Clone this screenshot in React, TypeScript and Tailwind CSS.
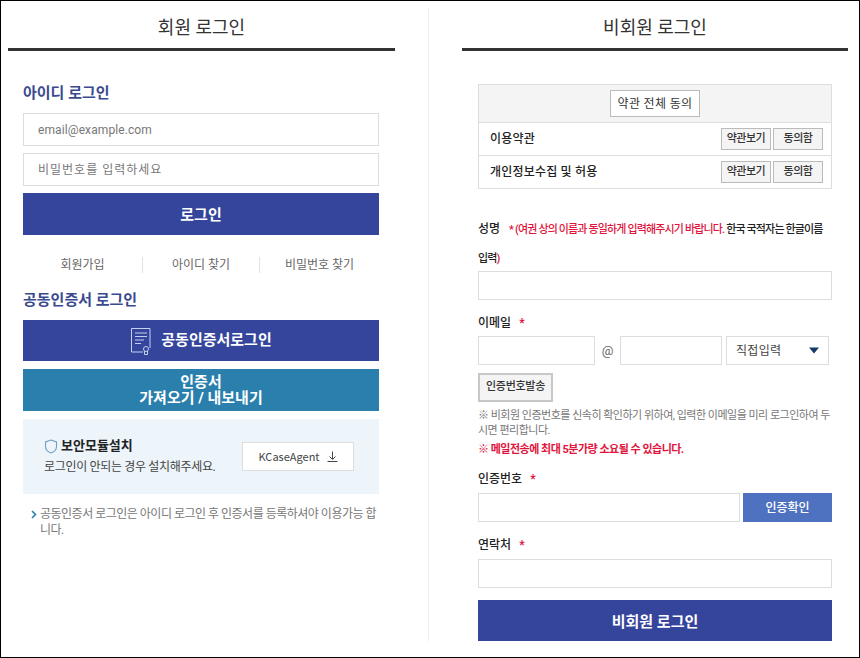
import React from "react";

const font = { fontFamily: 'Roboto, "Noto Sans CJK KR", sans-serif' };

function Req() {
  return <span className="text-[#e0143c] text-[12px] font-bold ml-[8px]">*</span>;
}

function Small({ children }: { children: React.ReactNode }) {
  return (
    <button className="w-[50px] h-[22px] bg-[#f4f4f4] border border-[#bbbbbb] text-[11px] text-[#333] font-medium tracking-[-0.5px] flex items-center justify-center">
      {children}
    </button>
  );
}

function Field({ className = "" }: { className?: string }) {
  return <div className={"h-[29px] bg-white border border-[#dddddd] " + className} />;
}

export default function App() {
  return (
    <div style={font} className="w-[860px] h-[658px] bg-white border border-black flex overflow-hidden text-[#333]">
      {/* left */}
      <div className="w-[428px] h-[633px] mt-[7px] pl-[7px] border-r border-[#eeeeee] shrink-0">
        <div className="w-[387px]">
          <div className="h-[40px] flex items-start justify-center text-[18px] leading-[39px] text-[#333]">회원 로그인</div>
          <div className="h-[3px] bg-[#333]" />
        </div>
        <div className="ml-[15px] w-[356px]">
          <h2 className="mt-[31px] text-[15px] leading-[22px] font-bold text-[#3a4a8f]">아이디 로그인</h2>
          <div className="mt-[9px] h-[33px] border border-[#dddddd] pl-[14px] flex items-center text-[12px] tracking-[0.1px] text-[#777]">email@example.com</div>
          <div className="mt-[7px] h-[33px] border border-[#dddddd] pl-[14px] pt-[1px] flex items-center text-[12px] tracking-[1px] text-[#777]">비밀번호를 입력하세요</div>
          <button className="mt-[7px] w-full h-[42px] pt-[3px] bg-[#34459b] text-white text-[15px] font-bold flex items-center justify-center">로그인</button>
          <div className="mt-[22px] h-[16px] flex items-center text-[12px] text-[#666]">
            <div className="w-[119px] text-center">회원가입</div>
            <div className="w-px h-[16px] bg-[#e2e2e2]" />
            <div className="w-[116px] text-center">아이디 찾기</div>
            <div className="w-px h-[16px] bg-[#e2e2e2]" />
            <div className="w-[119px] text-center">비밀번호 찾기</div>
          </div>
          <h2 className="mt-[16px] text-[15px] leading-[22px] font-bold text-[#3a4a8f]">공동인증서 로그인</h2>
          <button className="mt-[9px] w-full h-[41px] bg-[#34459b] text-white text-[15px] font-bold flex items-center justify-center gap-[9px]">
            <svg width="22" height="28" viewBox="0 0 22 28" fill="none" stroke="#c5d0f0" strokeWidth="1">
              <path d="M20 21V1.500H1.500V25H13" />
              <path d="M5 6h12M5 9.500h12M5 13h9M5 16.500h6" />
              <circle cx="16" cy="22" r="2.500" />
              <path d="M14.500 24v3.500h3V24" />
            </svg>
            <span>공동인증서로그인</span>
          </button>
          <button className="mt-[8px] w-full h-[42px] bg-[#2a7fad] text-white text-[15px] font-bold leading-[16px] flex flex-col items-center justify-center">
            <span>인증서</span>
            <span>가져오기 / 내보내기</span>
          </button>
          <div className="mt-[8px] h-[75px] bg-[#edf5fa] flex items-center pl-[21px]">
            <div className="w-[198px]">
              <div className="flex items-center gap-[3px] text-[13px] leading-[18px] font-bold text-[#222]">
                <svg width="14" height="15" viewBox="0 0 14 15" fill="none" stroke="#6f9fc0" strokeWidth="1.1">
                  <path d="M7 1l5.500 2v4.500c0 3-2.500 5.500-5.500 6.500C4 13 1.500 10.500 1.500 7.500V3z" />
                </svg>
                보안모듈설치
              </div>
              <div className="mt-[3px] text-[12px] leading-[18px] text-[#444] tracking-[-0.33px]">로그인이 안되는 경우 설치해주세요.</div>
            </div>
            <div className="w-[112px] h-[29px] bg-white border border-[#dddddd] flex items-center justify-center gap-[7px] text-[11px] text-[#444]" style={{ fontFamily: '"Noto Sans CJK KR", sans-serif' }}>
              KCaseAgent
              <svg width="11" height="11" viewBox="0 0 11 11" fill="none" stroke="#444" strokeWidth="1">
                <path d="M5.500 0.500V8M2.500 5.500l3 3 3-3M0.500 10.500h10" />
              </svg>
            </div>
          </div>
          <div className="relative mt-[12px] pl-[17px] text-[12px] leading-[16px] text-[#777] tracking-[-0.5px] break-all">
            <svg className="absolute left-[8px] top-[4px]" width="6" height="9" viewBox="0 0 6 9" fill="none" stroke="#2a7fad" strokeWidth="1.6">
              <path d="M1 1l3.500 3.500L1 8" />
            </svg>
            공동인증서 로그인은 아이디 로그인 후 인증서를 등록하셔야 이용가능 합니다.
          </div>
        </div>
      </div>

      {/* right */}
      <div className="flex-1 mt-[7px] pl-[33px]">
        <div className="w-[386px]">
          <div className="h-[40px] text-center text-[18px] leading-[39px] text-[#333]">비회원 로그인</div>
          <div className="h-[3px] bg-[#333]" />
        </div>
        <div className="ml-[16px] w-[354px]">
          <div className="mt-[33px] border border-[#dddddd] text-[12px]">
            <div className="h-[38px] bg-[#f4f4f4] flex items-center justify-center border-b border-[#dddddd]">
              <button className="w-[90px] h-[27px] bg-white border border-[#bbbbbb] text-[12px] text-[#333] tracking-[0.35px]">약관 전체 동의</button>
            </div>
            <div className="h-[33px] flex items-center justify-between pl-[11px] pr-[8px] border-b border-[#dddddd] font-medium text-[12px] tracking-[0.2px] text-[#222]">
              이용약관
              <div className="flex gap-[2px]"><Small>약관보기</Small><Small>동의함</Small></div>
            </div>
            <div className="h-[32px] flex items-center justify-between pl-[11px] pr-[8px] font-medium text-[12px] tracking-[0.2px] text-[#222]">
              개인정보수집 및 허용
              <div className="flex gap-[2px]"><Small>약관보기</Small><Small>동의함</Small></div>
            </div>
          </div>

          <div className="mt-[26px] text-[11px] leading-[29px] tracking-[-0.85px] font-medium text-[#222]">
            <span className="text-[12px] tracking-normal mr-[9px]">성명</span>
            <span className="text-[#e0143c]">* (여권 상의 이름과 동일하게 입력해주시기 바랍니다. </span>
            한국 국적자는 한글이름<br />입력<span className="text-[#e0143c]">)</span>
          </div>
          <Field className="mt-[-2px]" />

          <div className="mt-[14px] text-[12px] leading-[18px] font-medium text-[#222]">이메일<Req /></div>
          <div className="mt-[4px] flex items-center">
            <Field className="w-[117px]" />
            <div className="w-[25px] text-center text-[13px] text-[#666]">@</div>
            <Field className="w-[102px]" />
            <div className="ml-[4px] w-[103px] h-[29px] border border-[#dddddd] pl-[9px] pr-[9px] flex items-center justify-between text-[12px] text-[#444] tracking-[0.3px]">
              직접입력
              <svg width="10" height="7" viewBox="0 0 10 7"><path d="M0 0.500h10L5 6.500z" fill="#123a66" /></svg>
            </div>
          </div>
          <button className="mt-[8px] w-[75px] h-[29px] bg-[#f4f4f4] border-2 border-[#c8c8c8] text-[11px] font-medium text-[#333] tracking-[-0.3px]">인증번호발송</button>
          <p className="mt-[6px] text-[11px] leading-[15px] text-[#777] tracking-[-0.5px] break-all">※ 비회원 인증번호를 신속히 확인하기 위하여, 입력한 이메일을 미리 로그인하여 두시면 편리합니다.</p>
          <p className="mt-[4px] text-[11px] leading-[16px] font-bold text-[#e0143c] tracking-[-0.5px]">※ 메일전송에 최대 5분가량 소요될 수 있습니다.</p>

          <div className="mt-[12px] text-[12px] leading-[18px] font-medium text-[#222]">인증번호<Req /></div>
          <div className="mt-[5px] flex">
            <Field className="w-[262px]" />
            <button className="ml-[3px] w-[89px] h-[29px] bg-[#4f72c0] text-white text-[12px] font-medium">인증확인</button>
          </div>

          <div className="mt-[14px] text-[12px] leading-[18px] font-medium text-[#222]">연락처<Req /></div>
          <Field className="mt-[5px]" />
          <button className="mt-[12px] w-full h-[41px] pt-[3px] bg-[#34459b] text-white text-[15px] font-bold">비회원 로그인</button>
        </div>
      </div>
    </div>
  );
}
